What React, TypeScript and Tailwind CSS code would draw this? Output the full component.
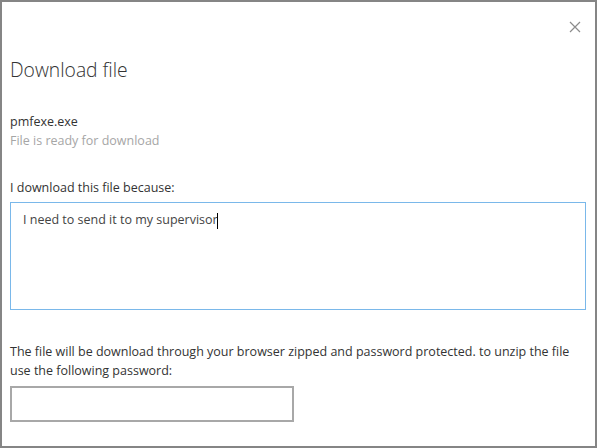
import React from "react";

export default function App() {
  return (
    <div
      className="relative w-[597px] h-[448px] border-2 border-[#858585] bg-white box-border overflow-hidden"
      style={{ fontFamily: '"Open Sans", "Noto Sans", sans-serif' }}
    >
      <button className="absolute left-[567px] top-[19px] w-[12px] h-[12px] flex items-center justify-center" aria-label="Close">
        <svg width="12" height="12" viewBox="0 0 12 12">
          <path d="M1 1 L11 11 M11 1 L1 11" stroke="#8c8c8c" strokeWidth="1.2" fill="none" />
        </svg>
      </button>
      <div className="flex flex-col pl-[8px] pr-[9px]">
        <h1 className="mt-[54px] text-[19.3px] leading-[28px] font-light text-[#333]">Download file</h1>
        <div className="mt-[28px] text-[12.5px] leading-[19px] text-[#333]">pmfexe.exe</div>
        <div className="text-[12.5px] leading-[19px] text-[#a6a6a6]">File is ready for download</div>
        <div className="mt-[28px] text-[12.5px] leading-[19px] text-[#333]">I download this file because:</div>
        <div className="mt-[5px] w-[576px] h-[108px] border border-[#7ab8ea] pl-[12px] pt-[7px] text-[12.5px] leading-[19px] text-[#444]">
          I need to send it to my supervisor
          <span className="inline-block w-[1px] h-[16px] bg-black align-middle -ml-[1px]" />
        </div>
        <p className="mt-[32px] text-[12.5px] leading-[19px] text-[#333]">
          The file will be download through your browser zipped and password protected. to unzip the file use the following password:
        </p>
        <div className="mt-[6px] w-[284px] h-[36px] border-2 border-[#a8a8a8]" />
      </div>
    </div>
  );
}
